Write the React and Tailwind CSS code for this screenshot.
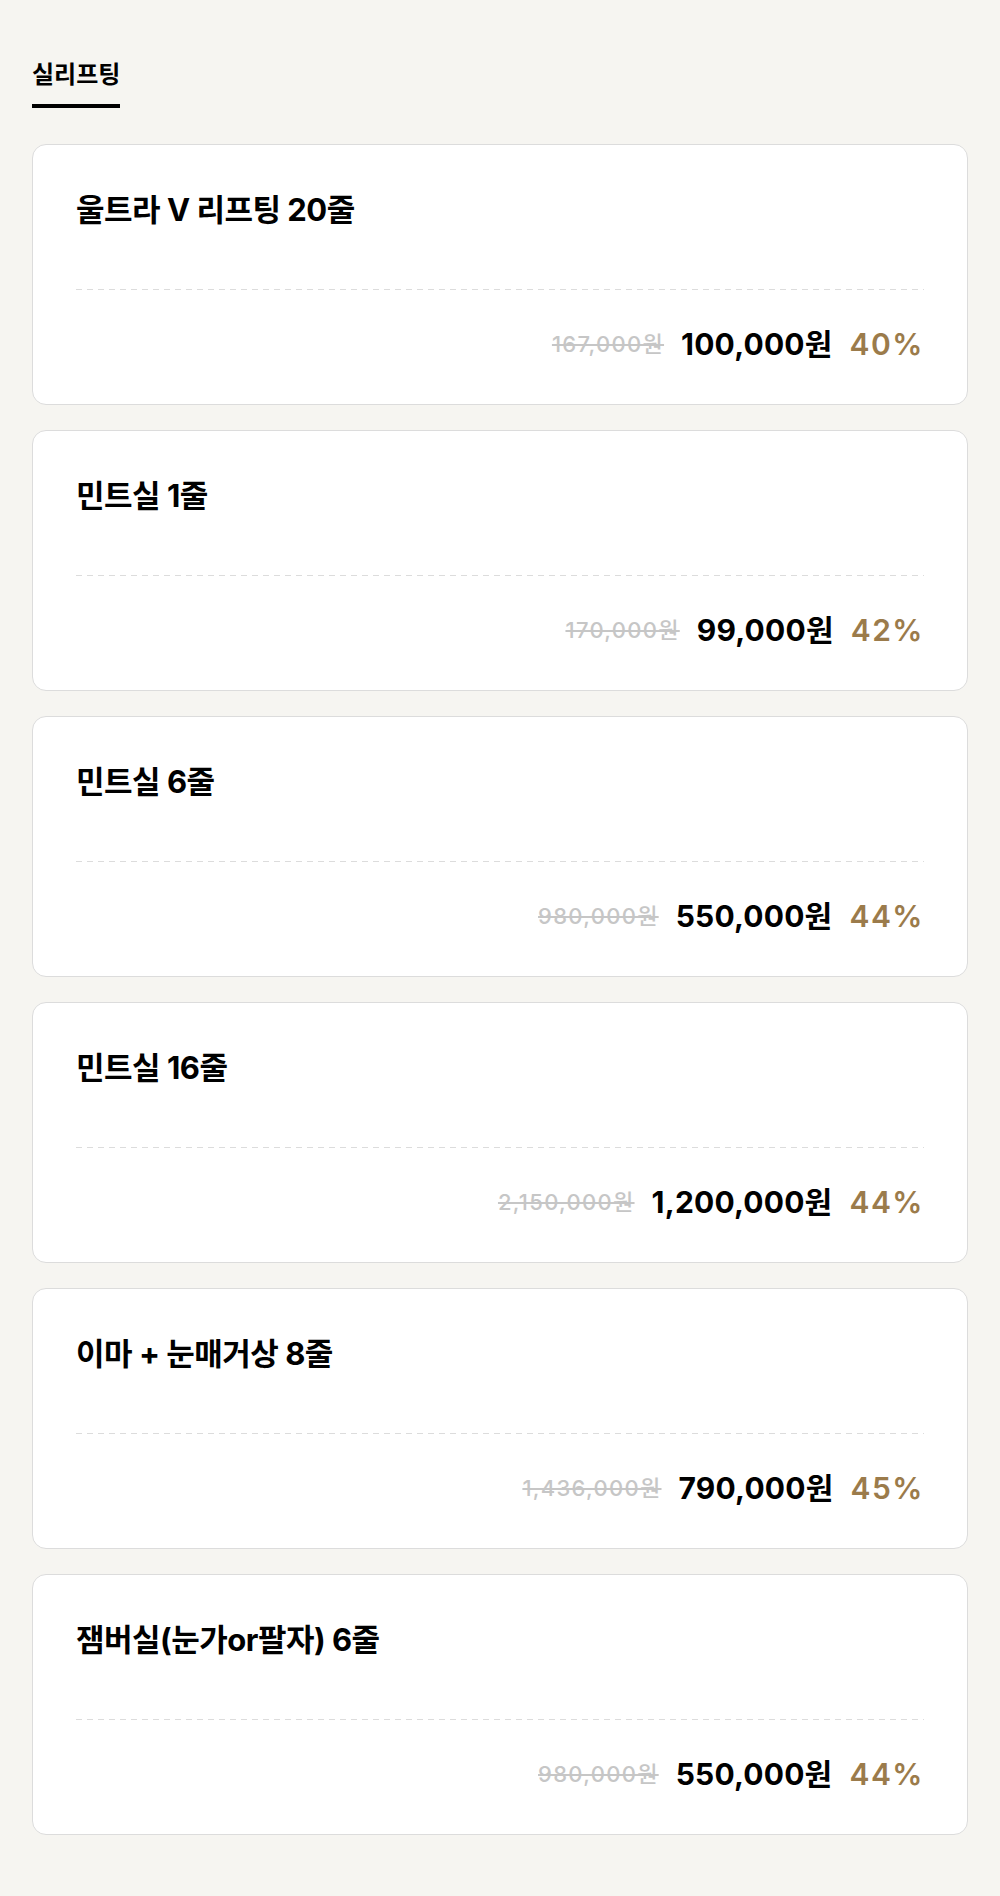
import React from "react";

const items = [
  { name: "울트라 V 리프팅 20줄", origin: "167,000원", price: "100,000원", rate: "40%" },
  { name: "민트실 1줄", origin: "170,000원", price: "99,000원", rate: "42%" },
  { name: "민트실 6줄", origin: "980,000원", price: "550,000원", rate: "44%" },
  { name: "민트실 16줄", origin: "2,150,000원", price: "1,200,000원", rate: "44%" },
  { name: "이마 + 눈매거상 8줄", origin: "1,436,000원", price: "790,000원", rate: "45%" },
  { name: "잼버실(눈가or팔자) 6줄", origin: "980,000원", price: "550,000원", rate: "44%" },
];

const PriceCard = ({ item }) => (
  <div className="bg-white border border-[#dcdcdc] rounded-[14px] h-[261px] px-[43px] pt-[42px]">
    <h3 className="text-[31px] font-bold leading-[46px] text-black tracking-[-0.5px]">{item.name}</h3>
    <div className="mt-[56px] h-px bg-[repeating-linear-gradient(to_right,#dcdcdc_0_6px,transparent_6px_11px)]" />
    <div className="mt-[34px] flex items-center justify-end leading-[40px]">
      <span className="text-[22px] font-medium text-[#c6c6c6] line-through tracking-[1.3px]">{item.origin}</span>
      <span className="ml-[17px] text-[30px] font-bold text-black tracking-[0.2px]">{item.price}</span>
      <span className="ml-[17px] text-[30px] font-semibold text-[#9b7b4b] tracking-[1.5px]">{item.rate}</span>
    </div>
  </div>
);

export default function App() {
  return (
    <div
      className="min-h-[1896px] bg-[#f6f5f1] px-[32px] pt-[58px]"
      style={{ fontFamily: 'Inter, "Noto Sans CJK KR", sans-serif' }}
    >
      <div className="flex">
        <div className="border-b-4 border-black pb-[12px]">
          <span className="block text-[24px] font-bold leading-[34px] text-black">실리프팅</span>
        </div>
      </div>
      <div className="mt-[36px] flex flex-col gap-[25px]">
        {items.map((item, i) => (
          <PriceCard key={i} item={item} />
        ))}
      </div>
    </div>
  );
}
